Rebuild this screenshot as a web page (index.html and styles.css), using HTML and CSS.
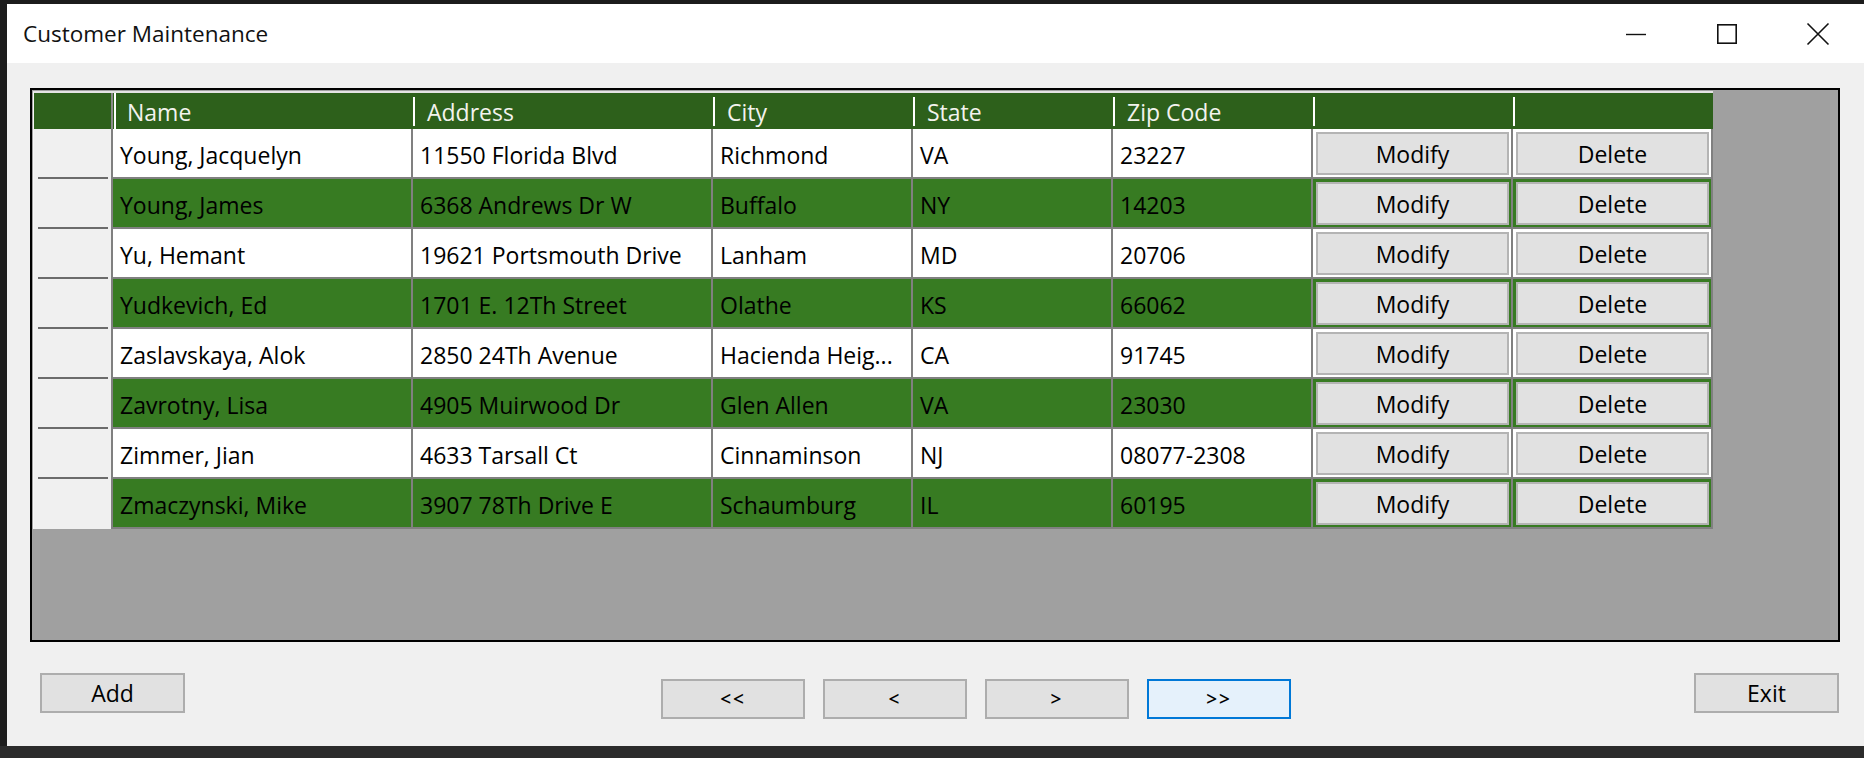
FILE: index.html
```html
<!DOCTYPE html>
<html lang="en">
<head>
<meta charset="utf-8">
<title>Customer Maintenance</title>
<link rel="stylesheet" href="styles.css">
</head>
<body>
<div class="desktop">
  <div class="window">
    <div class="titlebar">
      <span class="title">Customer Maintenance</span>
      <div class="controls">
        <div class="ctl"><svg width="22" height="22" viewBox="0 0 22 22"><path d="M1 11.5h20" stroke="#111" stroke-width="1.4" fill="none"/></svg></div>
        <div class="ctl"><svg width="22" height="22" viewBox="0 0 22 22"><rect x="1.8" y="1.8" width="18.4" height="18.4" stroke="#111" stroke-width="1.6" fill="none"/></svg></div>
        <div class="ctl"><svg width="24" height="24" viewBox="0 0 24 24"><path d="M1.5 1.5L22.5 22.5M22.5 1.5L1.5 22.5" stroke="#111" stroke-width="1.6" fill="none"/></svg></div>
      </div>
    </div>
    <div class="client">
      <div class="grid">
        <div class="table">
          <div class="row head">
            <div class="hcell corner"></div>
            <div class="hcell first">Name</div>
            <div class="hcell">Address</div>
            <div class="hcell">City</div>
            <div class="hcell">State</div>
            <div class="hcell">Zip Code</div>
            <div class="hcell"></div>
            <div class="hcell"></div>
          </div>
          <div class="row">
            <div class="rh"><i></i></div>
            <div class="cell">Young, Jacquelyn</div>
            <div class="cell">11550 Florida Blvd</div>
            <div class="cell">Richmond</div>
            <div class="cell">VA</div>
            <div class="cell">23227</div>
            <div class="cell bcell"><button class="gbtn">Modify</button></div>
            <div class="cell bcell"><button class="gbtn">Delete</button></div>
          </div>
          <div class="row alt">
            <div class="rh"><i></i></div>
            <div class="cell">Young, James</div>
            <div class="cell">6368 Andrews Dr W</div>
            <div class="cell">Buffalo</div>
            <div class="cell">NY</div>
            <div class="cell">14203</div>
            <div class="cell bcell"><button class="gbtn">Modify</button></div>
            <div class="cell bcell"><button class="gbtn">Delete</button></div>
          </div>
          <div class="row">
            <div class="rh"><i></i></div>
            <div class="cell">Yu, Hemant</div>
            <div class="cell">19621 Portsmouth Drive</div>
            <div class="cell">Lanham</div>
            <div class="cell">MD</div>
            <div class="cell">20706</div>
            <div class="cell bcell"><button class="gbtn">Modify</button></div>
            <div class="cell bcell"><button class="gbtn">Delete</button></div>
          </div>
          <div class="row alt">
            <div class="rh"><i></i></div>
            <div class="cell">Yudkevich, Ed</div>
            <div class="cell">1701 E. 12Th Street</div>
            <div class="cell">Olathe</div>
            <div class="cell">KS</div>
            <div class="cell">66062</div>
            <div class="cell bcell"><button class="gbtn">Modify</button></div>
            <div class="cell bcell"><button class="gbtn">Delete</button></div>
          </div>
          <div class="row">
            <div class="rh"><i></i></div>
            <div class="cell">Zaslavskaya, Alok</div>
            <div class="cell">2850 24Th Avenue</div>
            <div class="cell">Hacienda Heig...</div>
            <div class="cell">CA</div>
            <div class="cell">91745</div>
            <div class="cell bcell"><button class="gbtn">Modify</button></div>
            <div class="cell bcell"><button class="gbtn">Delete</button></div>
          </div>
          <div class="row alt">
            <div class="rh"><i></i></div>
            <div class="cell">Zavrotny, Lisa</div>
            <div class="cell">4905 Muirwood Dr</div>
            <div class="cell">Glen Allen</div>
            <div class="cell">VA</div>
            <div class="cell">23030</div>
            <div class="cell bcell"><button class="gbtn">Modify</button></div>
            <div class="cell bcell"><button class="gbtn">Delete</button></div>
          </div>
          <div class="row">
            <div class="rh"><i></i></div>
            <div class="cell">Zimmer, Jian</div>
            <div class="cell">4633 Tarsall Ct</div>
            <div class="cell">Cinnaminson</div>
            <div class="cell">NJ</div>
            <div class="cell">08077-2308</div>
            <div class="cell bcell"><button class="gbtn">Modify</button></div>
            <div class="cell bcell"><button class="gbtn">Delete</button></div>
          </div>
          <div class="row alt last">
            <div class="rh"></div>
            <div class="cell">Zmaczynski, Mike</div>
            <div class="cell">3907 78Th Drive E</div>
            <div class="cell">Schaumburg</div>
            <div class="cell">IL</div>
            <div class="cell">60195</div>
            <div class="cell bcell"><button class="gbtn">Modify</button></div>
            <div class="cell bcell"><button class="gbtn">Delete</button></div>
          </div>
        </div>
      </div>
      <div class="actions">
        <button class="btn">Add</button>
        <div class="nav">
          <button class="btn nbtn">&lt;&lt;</button>
          <button class="btn nbtn">&lt;</button>
          <button class="btn nbtn">&gt;</button>
          <button class="btn nbtn focus">&gt;&gt;</button>
        </div>
        <button class="btn exit">Exit</button>
      </div>
    </div>
  </div>
</div>
</body>
</html>
```

FILE: styles.css
```css
* { box-sizing: border-box; }

body {
  margin: 0;
  width: 1864px;
  height: 758px;
  overflow: hidden;
  background: #232323;
  font-family: "Open Sans", "Noto Sans", sans-serif;
  color: #000;
}

.desktop {
  height: 758px;
  padding: 4px 0 0 7px;
  background: #1c1c1c;
  border-bottom: 12px solid #2b2b2b;
}

.window {
  width: 1857px;
  height: 742px;
  display: flex;
  flex-direction: column;
  background: #f0f0f0;
}

.titlebar {
  height: 59px;
  flex: none;
  background: #fff;
  display: flex;
  align-items: center;
}

.title {
  flex: 1;
  padding: 2px 0 0 16px;
  font-size: 22.5px;
  line-height: 1;
  color: #111;
}

.controls {
  display: flex;
  height: 100%;
  margin-right: 1px;
}

.ctl {
  width: 91px;
  display: flex;
  align-items: center;
  justify-content: center;
}

.client {
  flex: 1;
  padding: 25px 24px 0 23px;
}

.grid {
  height: 554px;
  border: 2px solid #000;
  background: #a0a0a0;
  padding: 1px 0 0 1px;
}

.table {
  width: 1680px;
  border-left: 1px solid #f7f7f7;
  border-top: 2px solid #e4e4e4;
}

.row {
  display: grid;
  grid-template-columns: 79px 300px 300px 200px 200px 200px 200px 200px;
  height: 50px;
}

.row.head {
  height: 36px;
}

.hcell {
  position: relative;
  background: #2d601b;
  color: #f3f3ee;
  font-size: 23px;
  line-height: 1;
  padding: 2px 0 0 14px;
  display: flex;
  align-items: center;
  white-space: nowrap;
}

.hcell::before {
  content: "";
  position: absolute;
  left: 0;
  top: 4px;
  bottom: 3px;
  width: 2px;
  background: #fff;
}

.hcell.corner {
  border-right: 2px solid #8a8a8a;
}

.hcell.corner::before {
  display: none;
}

.hcell.first::before {
  left: 1px;
  top: 0;
  bottom: 0;
}

.rh {
  background: #f0f0f0;
  border-right: 2px solid #808080;
  padding: 0 3px 0 4px;
  display: flex;
  align-items: flex-end;
}

.rh i {
  display: block;
  width: 100%;
  height: 2px;
  background: #6c6c6c;
}

.cell {
  background: #fff;
  border-right: 2px solid #808080;
  border-bottom: 2px solid #808080;
  padding: 5px 0 0 7px;
  display: flex;
  align-items: center;
  font-size: 23px;
  line-height: 1;
  white-space: nowrap;
  overflow: hidden;
}

.row.alt .cell {
  background: #377b22;
}

.cell.bcell {
  padding: 3px 2px 2px 3px;
  align-items: stretch;
}

.gbtn {
  flex: 1;
  margin: 0;
  padding: 2px 0 0;
  border: 2px solid #b4b4b4;
  background: #e1e1e1;
  font: inherit;
  font-size: 23px;
  line-height: 1;
  color: #000;
  display: flex;
  align-items: center;
  justify-content: center;
}

.actions {
  display: flex;
  align-items: flex-start;
  margin-top: 31px;
  padding: 0 1px 0 10px;
}

.btn {
  width: 145px;
  height: 40px;
  margin: 0;
  padding: 0;
  border: 2px solid #adadad;
  background: #e1e1e1;
  font-family: "Open Sans", "Noto Sans", sans-serif;
  font-size: 23px;
  line-height: 1;
  color: #000;
}

.nav {
  display: flex;
  gap: 18px;
  margin-left: 476px;
  margin-top: 6px;
}

.nbtn {
  width: 144px;
  font-size: 19px;
  font-weight: 600;
  letter-spacing: 2px;
}

.btn.focus {
  border-color: #0078d7;
  background: #e5f1fb;
}

.exit {
  margin-left: auto;
}
```
